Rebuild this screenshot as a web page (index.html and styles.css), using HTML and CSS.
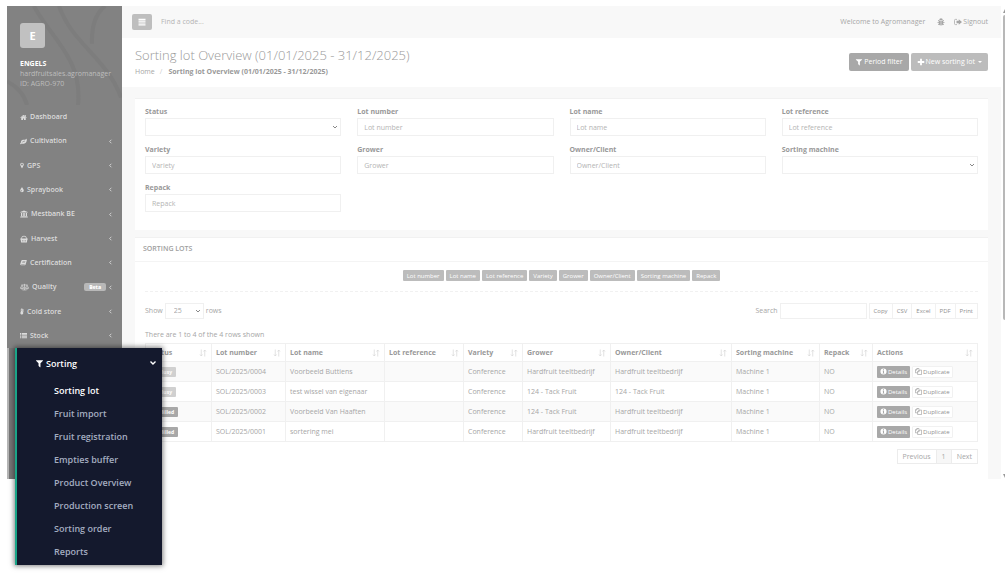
FILE: index.html
```html
<!DOCTYPE html>
<html lang="en">
<head>
<meta charset="utf-8">
<title>Sorting lot Overview</title>
<link rel="stylesheet" href="styles.css">
</head>
<body>
<svg class="sprite" aria-hidden="true">
  <symbol id="filter" viewBox="0 0 1792 1792"><path d="M1595 295q17 41-14 70l-493 493v742q0 42-39 59-13 5-25 5-27 0-45-19l-256-256q-19-19-19-45v-486l-493-493q-31-29-14-70 17-39 59-39h1280q42 0 59 39z"/></symbol>
  <symbol id="home" viewBox="0 0 1792 1792"><path d="M1472 992v480q0 26-19 45t-45 19h-384v-384h-256v384h-384q-26 0-45-19t-19-45v-480q0-1 .5-3t.5-3l575-474 575 474q1 2 1 6zm223-69l-62 74q-8 9-21 11h-3q-13 0-21-7l-692-577-692 577q-12 8-24 7-13-2-21-11l-62-74q-8-10-7-23.5t11-21.5l719-599q32-26 76-26t76 26l244 204v-195q0-14 9-23t23-9h192q14 0 23 9t9 23v408l219 182q10 8 11 21.5t-7 23.5z"/></symbol>
  <symbol id="leaf" viewBox="0 0 16 16"><path fill-rule="evenodd" d="M15.300 2C16.500 7 14 12.500 8.500 13c-2 .2-3.500-.4-4.500-.7-.8 0-1.500 2-2.500 2S0 13.300.3 12.700c.4-1 1.900-1.500 1.700-2.400C1.600 6.500 4 4.300 7 4c3-.3 5.500.3 7-2 .4-.6 1-.6 1.300 0zM4.500 10.800C7 8.400 9 7.800 11.500 7.500V6.500C8.500 6.500 6 7.800 4 10z"/></symbol>
  <symbol id="pin" viewBox="0 0 10 16"><path fill-rule="evenodd" d="M5 1a4.500 4.500 0 0 1 4.500 4.500c0 1.500-.6 2.200-1 3L5.800 14.500q-.8 1-1.600 0L1.500 8.500c-.4-.8-1-1.500-1-3A4.500 4.500 0 0 1 5 1zm0 2.300a2.200 2.200 0 1 0 0 4.400 2.200 2.200 0 0 0 0-4.400z"/></symbol>
  <symbol id="drop" viewBox="0 0 10 16"><path fill-rule="evenodd" d="M5 1C5.500 4 9.500 7 9.500 10.500a4.500 4.500 0 0 1-9 0C.5 7 4.500 4 5 1zM4.500 9.500C3 10.500 2.500 12 4 12.800c1.500 0 1.500-2 .5-3.300z"/></symbol>
  <symbol id="bank" viewBox="0 0 16 16"><path d="M8 1l7.500 3v1h-15V4zM2 6h2v6h1.500V6h2v6h1V6h2v6H12V6h2v6h.8v1H1.200v-1H2zM.5 13.500h15V15H.5z"/></symbol>
  <symbol id="basket" viewBox="0 0 16 16"><path fill-rule="evenodd" d="M2.500 7C2.500 4 4.500 1.500 8 1.500S13.500 4 13.500 7h2v2h-.8l-.9 6H2.200l-.9-6H.5V7zm1.500 0h8c0-2.500-1.500-4-4-4S4 4.500 4 7zm.5 3v3h1v-3zm3 0v3h1v-3zm3 0v3h1v-3z"/></symbol>
  <symbol id="book" viewBox="0 0 16 16"><path fill-rule="evenodd" d="M5 2h9.500c1 0 1.300.7 1 1.500l-2.700 9c-.3.900-1 1.500-2 1.500H2.500C1 14 .2 12.500.6 11.300L3 4c.4-1.200 1-2 2-2zm1 3l-.3 1h6.500l.3-1zm-.8 2.500l-.3 1h6.500l.3-1zM2.300 11.500c-.2.600.2 1 .8 1h7.500l.3-1z"/></symbol>
  <symbol id="scale" viewBox="0 0 20 16"><path fill="none" stroke="currentColor" stroke-width="1.500" d="M10 1v13.500M5.500 14.500h9M3 3.500h14M4.500 4l-3.500 6.500h7zM15.500 4L12 10.500h7zM1 10.500c.5 2.500 6.500 2.500 7 0M12 10.500c.5 2.500 6.500 2.500 7 0"/></symbol>
  <symbol id="thermo" viewBox="0 0 10 16"><path fill-rule="evenodd" d="M2 3a2.500 2.500 0 0 1 5 0v6a3.600 3.600 0 1 1-5 0zm2 0v3h1V3zM8 3h2v1.200H8zm0 2.500h2v1.200H8zM8 8h2v1.200H8z"/></symbol>
  <symbol id="list" viewBox="0 0 16 16"><path d="M0 2h2.500v2.300H0zm4 0h12v2.300H4zM0 5.300h2.500v2.300H0zm4 0h12v2.300H4zM0 8.600h2.500v2.300H0zm4 0h12v2.300H4zM0 12h2.500v2.300H0zm4 0h12v2.300H4z"/></symbol>
  <symbol id="lines" viewBox="0 0 16 16"><path d="M1 1.500h14v2.300H1zm0 3.700h14v2.300H1zm0 3.700h14v2.300H1zm0 3.700h14v2.300H1z"/></symbol>
  <symbol id="bug" viewBox="0 0 16 16"><path d="M4.500 4a3.500 3.500 0 0 1 7 0zM3.500 5h4v10C5 15 3.500 13.500 3.500 11zm5 0h4v6c0 2.500-1.500 4-4 4z"/><path fill="none" stroke="currentColor" stroke-width="1.500" d="M4 6L2 4M4 9H1M4 12l-2 2M12 6l2-2M12 9h3M12 12l2 2"/></symbol>
  <symbol id="signout" viewBox="0 0 16 16"><path fill="none" stroke="currentColor" stroke-width="1.500" d="M6 2.800H3A2 2 0 0 0 1 5v6a2 2 0 0 0 2 2.200h3"/><path d="M9.500 2.500l6.500 5.500-6.500 5.500v-3H5v-5h4.500z"/></symbol>
  <symbol id="plus" viewBox="0 0 16 16"><path d="M6.200 1.500h3.600v4.700h4.700v3.600H9.800v4.700H6.200V9.800H1.500V6.200h4.700z"/></symbol>
  <symbol id="info" viewBox="0 0 16 16"><path fill-rule="evenodd" d="M8 1a7 7 0 1 1 0 14A7 7 0 0 1 8 1zM6.800 3v2h2.400V3zM6 6.300v1.400h.8v3.600H6v1.400h4v-1.400h-.8v-5z"/></symbol>
  <symbol id="copy" viewBox="0 0 16 16"><path fill="none" stroke="currentColor" stroke-width="1.300" d="M6 11H1V4.500L4.500 1H9v3M4.500 1v3.500H1M9.500 4.800H15V15H6V8.300zM9.500 4.800v3.500H6"/></symbol>
  <symbol id="left" viewBox="0 0 10 16"><path fill="none" stroke="currentColor" stroke-width="2" d="M7 4L3 8l4 4"/></symbol>
  <symbol id="down" viewBox="0 0 16 16"><path fill="none" stroke="currentColor" stroke-width="2.800" d="M3 5l5 5 5-5"/></symbol>
  <symbol id="sort" viewBox="0 0 16 16"><path fill="none" stroke="currentColor" stroke-width="1.500" d="M4.500 1v13M2 11l2.500 3L7 11M11.500 15V2M9 5l2.500-3L14 5"/></symbol>
</svg>

<div class="app">
  <aside class="sidebar">
    <svg class="pattern" viewBox="0 0 115 105" preserveAspectRatio="none" aria-hidden="true"><path d="M27 0C42 32 76 55 71 105M52 0C65 40 100 55 114 97M0 80q16 9 20 25M98 0q-14 12-13 40"/></svg>
    <header class="profile">
      <div class="avatar">E</div>
      <strong>ENGELS</strong>
      <span>hardfruitsales.agromanager</span>
      <span>ID: AGRO-970</span>
    </header>
    <nav class="menu">
      <a href="#"><svg><use href="#home"/></svg>Dashboard</a>
      <a href="#"><svg><use href="#leaf"/></svg>Cultivation<svg class="arrow"><use href="#left"/></svg></a>
      <a href="#"><svg class="slim"><use href="#pin"/></svg>GPS<svg class="arrow"><use href="#left"/></svg></a>
      <a href="#"><svg class="slim"><use href="#drop"/></svg>Spraybook<svg class="arrow"><use href="#left"/></svg></a>
      <a href="#"><svg class="wide"><use href="#bank"/></svg>Mestbank BE<svg class="arrow"><use href="#left"/></svg></a>
      <a href="#"><svg class="wide"><use href="#basket"/></svg>Harvest<svg class="arrow"><use href="#left"/></svg></a>
      <a href="#"><svg><use href="#book"/></svg>Certification<svg class="arrow"><use href="#left"/></svg></a>
      <a href="#"><svg class="wider"><use href="#scale"/></svg>Quality<b class="beta">Beta</b><svg class="arrow"><use href="#left"/></svg></a>
      <a href="#"><svg class="slim"><use href="#thermo"/></svg>Cold store<svg class="arrow"><use href="#left"/></svg></a>
      <a href="#"><svg><use href="#list"/></svg>Stock<svg class="arrow"><use href="#left"/></svg></a>
    </nav>
    <div class="current">
      <nav class="flyout">
        <a class="flyout-title" href="#"><svg><use href="#filter"/></svg>Sorting<svg class="caret"><use href="#down"/></svg></a>
        <a class="active" href="#">Sorting lot</a>
        <a href="#">Fruit import</a>
        <a href="#">Fruit registration</a>
        <a href="#">Empties buffer</a>
        <a href="#">Product Overview</a>
        <a href="#">Production screen</a>
        <a href="#">Sorting order</a>
        <a href="#">Reports</a>
      </nav>
    </div>
  </aside>

  <main class="main">
    <div class="topbar">
      <button class="toggle" aria-label="Toggle menu"><svg><use href="#lines"/></svg></button>
      <input class="find" type="text" placeholder="Find a code..." aria-label="Find a code">
      <span class="welcome">Welcome to Agromanager</span>
      <a class="bug" href="#" aria-label="Report a bug"><svg><use href="#bug"/></svg></a>
      <a class="signout" href="#"><svg><use href="#signout"/></svg>Signout</a>
    </div>
    <div class="heading">
      <div>
        <h1>Sorting lot Overview (01/01/2025 - 31/12/2025)</h1>
        <div class="crumbs"><a href="#">Home</a><i>/</i><strong>Sorting lot Overview (01/01/2025 - 31/12/2025)</strong></div>
      </div>
      <div class="heading-actions">
        <button class="btn dark"><svg><use href="#filter"/></svg>Period filter</button>
        <button class="btn"><svg><use href="#plus"/></svg>New sorting lot<span class="tri"></span></button>
      </div>
    </div>

    <section class="card filters">
      <label>Status<select><option></option></select></label>
      <label>Lot number<input type="text" placeholder="Lot number"></label>
      <label>Lot name<input type="text" placeholder="Lot name"></label>
      <label>Lot reference<input type="text" placeholder="Lot reference"></label>
      <label>Variety<input type="text" placeholder="Variety"></label>
      <label>Grower<input type="text" placeholder="Grower"></label>
      <label>Owner/Client<input type="text" placeholder="Owner/Client"></label>
      <label>Sorting machine<select><option></option></select></label>
      <label>Repack<input type="text" placeholder="Repack"></label>
    </section>

    <section class="card lots">
      <h2>SORTING LOTS</h2>
      <div class="body">
        <div class="chips">
          <button>Lot number</button><button>Lot name</button><button>Lot reference</button><button>Variety</button><button>Grower</button><button>Owner/Client</button><button>Sorting machine</button><button>Repack</button>
        </div>
        <div class="tools">
          <label>Show <select><option>25</option></select> rows</label>
          <label class="search">Search <input type="text"></label>
          <div class="group"><button>Copy</button><button>CSV</button><button>Excel</button><button>PDF</button><button>Print</button></div>
        </div>
        <p class="count">There are 1 to 4 of the 4 rows shown</p>
        <table>
          <colgroup><col class="c-status"><col class="c-num"><col class="c-name"><col class="c-ref"><col class="c-var"><col class="c-grow"><col class="c-own"><col class="c-mach"><col class="c-rep"><col class="c-act"></colgroup>
          <thead><tr>
            <th><div>Status<svg><use href="#sort"/></svg></div></th>
            <th><div>Lot number<svg><use href="#sort"/></svg></div></th>
            <th><div>Lot name<svg><use href="#sort"/></svg></div></th>
            <th><div>Lot reference<svg><use href="#sort"/></svg></div></th>
            <th><div>Variety<svg><use href="#sort"/></svg></div></th>
            <th><div>Grower<svg><use href="#sort"/></svg></div></th>
            <th><div>Owner/Client<svg><use href="#sort"/></svg></div></th>
            <th><div>Sorting machine<svg><use href="#sort"/></svg></div></th>
            <th><div>Repack<svg><use href="#sort"/></svg></div></th>
            <th><div>Actions<svg><use href="#sort"/></svg></div></th>
          </tr></thead>
          <tbody>
            <tr><td><b class="tag">Busy</b></td><td>SOL/2025/0004</td><td>Voorbeeld Buttiens</td><td></td><td>Conference</td><td>Hardfruit teeltbedrijf</td><td>Hardfruit teeltbedrijf</td><td>Machine 1</td><td>NO</td><td><div class="acts"><button class="details"><svg><use href="#info"/></svg>Details</button><button class="dup"><svg><use href="#copy"/></svg>Duplicate</button></div></td></tr>
            <tr><td><b class="tag">Busy</b></td><td>SOL/2025/0003</td><td>test wissel van eigenaar</td><td></td><td>Conference</td><td>124 - Tack Fruit</td><td>124 - Tack Fruit</td><td>Machine 1</td><td>NO</td><td><div class="acts"><button class="details"><svg><use href="#info"/></svg>Details</button><button class="dup"><svg><use href="#copy"/></svg>Duplicate</button></div></td></tr>
            <tr><td><b class="tag billed">Billed</b></td><td>SOL/2025/0002</td><td>Voorbeeld Van Haaften</td><td></td><td>Conference</td><td>124 - Tack Fruit</td><td>Hardfruit teeltbedrijf</td><td>Machine 1</td><td>NO</td><td><div class="acts"><button class="details"><svg><use href="#info"/></svg>Details</button><button class="dup"><svg><use href="#copy"/></svg>Duplicate</button></div></td></tr>
            <tr><td><b class="tag billed">Billed</b></td><td>SOL/2025/0001</td><td>sortering mei</td><td></td><td>Conference</td><td>Hardfruit teeltbedrijf</td><td>Hardfruit teeltbedrijf</td><td>Machine 1</td><td>NO</td><td><div class="acts"><button class="details"><svg><use href="#info"/></svg>Details</button><button class="dup"><svg><use href="#copy"/></svg>Duplicate</button></div></td></tr>
          </tbody>
        </table>
        <div class="pager"><a href="#">Previous</a><a class="on" href="#">1</a><a href="#">Next</a></div>
      </div>
    </section>
  </main>
  <div class="scroll" aria-hidden="true"><span class="up"></span><span class="thumb"></span><span class="dn"></span></div>
</div>
</body>
</html>
```
FILE: styles.css
```css
* { box-sizing: border-box; }
body { margin: 0; min-height: 100vh; background: #fff; color: #a6a6a6; font: 7px/10px "Open Sans", sans-serif; }
a { color: inherit; text-decoration: none; }
button, input, select { font: inherit; color: inherit; margin: 0; }
select { appearance: none; background: #fff url("data:image/svg+xml,%3Csvg xmlns='http://www.w3.org/2000/svg' viewBox='0 0 6 6'%3E%3Cpath d='M1 2l2 2 2-2' fill='none' stroke='%23888'/%3E%3C/svg%3E") no-repeat right 2px center / 6px 6px; }
svg { width: 8px; height: 8px; fill: currentColor; flex: none; }
.sprite { position: absolute; width: 0; height: 0; }

.app { display: flex; padding: 6px 0 0 7px; }

/* sidebar */
.sidebar { position: relative; flex: 0 0 115px; min-width: 0; display: flex; flex-direction: column; background: #828282; color: #dcdcdc; }
.pattern { position: absolute; top: 0; left: 0; width: 100%; height: 99px; }
.pattern path { fill: none; stroke: #7d7d7d; stroke-width: 4; }
.profile { position: relative; display: flex; flex-direction: column; padding: 17px 0 0 13px; color: #bdbdbd; }
.profile strong { color: #fff; }
.avatar { width: 25px; height: 25px; margin-bottom: 11px; border-radius: 3px; background: #c1c1c1; color: #fff; font: bold 11px/25px "Open Sans", sans-serif; text-align: center; }
.menu { display: flex; flex-direction: column; justify-content: space-between; min-height: 243px; margin-top: 16px; }
.menu a { display: flex; align-items: center; height: 24px; padding: 0 9px 0 13px; font-weight: 600; }
.menu svg { width: 7px; height: 7px; margin-right: 3px; }
.menu svg.slim { width: 4px; }
.menu svg.wide { width: 8px; height: 8px; }
.menu svg.wider { width: 9px; height: 8px; }
.menu svg.arrow { width: 5px; margin: 0 0 0 auto; }
.beta { margin-left: auto; padding: 0 5px; border-radius: 2px; background: #b8b8b8; color: #fff; font-size: 5px; line-height: 8px; }
.menu .beta + .arrow { margin-left: 2px; }
.current { position: relative; flex: 1; border-left: 2px solid #b5b5b5; background: #777; }
.flyout { position: absolute; top: 0; left: 6px; z-index: 2; width: 147px; padding-bottom: 2px; border-left: 2px solid #1aa588; background: #14192d; box-shadow: 0 0 5px 1px rgba(0, 0, 0, .5); color: #a4adc0; font: 600 9px/13px "Open Sans", sans-serif; }
.flyout a { display: flex; align-items: center; height: 23px; padding-left: 37px; }
.flyout .flyout-title { height: 31px; padding: 0 5px 1px 18px; color: #fff; }
.flyout .flyout-title svg { width: 9px; height: 9px; margin-right: 2px; }
.flyout .flyout-title .caret { width: 8px; height: 8px; margin: 0 0 0 auto; }
.flyout .active { color: #fff; }

/* main column */
.main { flex: 1; min-width: 0; background: #f8f8f8; }
.topbar { display: flex; align-items: center; height: 32px; padding: 0 13px 0 10px; }
.toggle { display: flex; align-items: center; justify-content: center; width: 20px; height: 16px; padding: 0; border: 0; border-radius: 2px; background: #bebebe; color: #fff; }
.find { flex: 1; margin-left: 9px; padding: 0; border: 0; background: none; }
::placeholder { color: #b4b4b4; opacity: 1; }
.bug { display: flex; margin: 0 9px 0 12px; }
.signout { display: flex; align-items: center; gap: 1px; }
.heading { display: flex; justify-content: space-between; height: 49px; padding: 9px 13px 0; background: #fff; }
h1 { margin: 0; font: 300 13px/17px "Open Sans", sans-serif; color: #999; }
.crumbs { margin-top: 3px; }
.crumbs i { margin: 0 6px 0 5px; font-style: normal; color: #ccc; }
.crumbs strong { color: #999; }
.heading-actions { display: flex; gap: 2px; padding-top: 6px; }
.btn { display: flex; align-items: center; gap: 1px; height: 18px; padding: 0 6px; border: 0; border-radius: 2px; background: #bcbcbc; color: #fff; }
.btn.dark { background: #a8a8a8; }
.tri { margin-left: 2px; border: 2px solid transparent; border-top-color: #fff; border-bottom: 0; }

.card { margin: 0 13px; background: #fff; border-top: 1px solid #f1f1f1; }
.filters { display: grid; grid-template-columns: repeat(4, 1fr); gap: 9px 16px; margin-top: 11px; padding: 8px 10px 18px; }
.filters label { display: flex; flex-direction: column; gap: 2px; font-weight: 700; line-height: 9px; color: #999; }
.filters input, .filters select { width: 100%; height: 18px; padding: 0 6px; border: 1px solid #f0f0f0; background-color: #fff; font-weight: 400; }
.lots { margin-top: 7px; }
h2 { margin: 0; padding: 6px 8px 7px; font: 600 7px/10px "Open Sans", sans-serif; color: #a0a0a0; border-bottom: 1px solid #f4f4f4; }
.body { padding: 8px 10px 15px; }
.chips { display: flex; justify-content: center; gap: 2px; padding-bottom: 10px; border-bottom: 1px dashed #f1f1f1; }
.chips button { height: 11px; padding: 0 4px; border: 0; border-radius: 1px; background: #bcbcbc; color: #fff; font-size: 6px; line-height: 10px; }
.tools { display: flex; align-items: center; margin-top: 11px; }
.tools label { display: flex; align-items: center; gap: 2px; }
.tools select { width: 39px; height: 16px; padding: 0 8px; border: 1px solid #f0f0f0; }
.search { margin-left: auto; }
.search input { width: 87px; height: 16px; border: 1px solid #f0f0f0; background: #fff; }
.group { display: flex; margin-left: 2px; border: 1px solid #f0f0f0; }
.group button { height: 14px; padding: 0 4px; border: 0; border-right: 1px solid #f1f1f1; background: #fff; color: #909090; font-size: 6px; }
.group button:last-child { border: 0; }
.count { margin: 11px 0 3px; }

table { width: 100%; table-layout: fixed; border-collapse: collapse; }
th, td { padding: 0 4px; border: 1px solid #f0f0f0; text-align: left; white-space: nowrap; }
th { height: 18px; color: #999; }
th div { display: flex; align-items: center; justify-content: space-between; }
th svg { width: 8px; height: 8px; color: #d8d8d8; }
td { height: 20px; }
tbody tr:nth-child(odd) { background: #fafafa; }
.c-status { width: 66px; } .c-num { width: 74px; } .c-name { width: 99px; } .c-ref { width: 79px; } .c-var { width: 59px; }
.c-grow { width: 88px; } .c-own { width: 121px; } .c-mach { width: 88px; } .c-rep { width: 53px; }
.tag { display: inline-block; margin-left: 6px; padding: 0 4px; border-radius: 1px; background: #d0d0d0; color: #fff; font-size: 5px; line-height: 10px; }
.tag.billed { background: #a8a8a8; }
.acts { display: flex; gap: 2px; }
.acts button { display: flex; align-items: center; gap: 1px; height: 12px; padding: 0 3px; border: 0; border-radius: 1px; font-size: 6px; }
.acts svg { width: 7px; height: 7px; }
.details { background: #a8a8a8; color: #fff; }
.acts .dup { padding: 0 2px; border: 1px solid #f1f1f1; background: #fff; color: #909090; }
.pager { display: flex; width: max-content; margin: 7px 0 0 auto; border: 1px solid #ececec; }
.pager a { padding: 1px 5px; line-height: 11px; }
.pager .on { border: solid #ececec; border-width: 0 1px; background: #f7f7f7; }

/* scroll indicator */
.scroll { display: flex; flex-direction: column; flex: 0 0 4px; padding: 3px 0 1px 2px; overflow: hidden; }
.up, .dn { width: 4px; border: 2px solid transparent; border-bottom: 4px solid #999; border-top: 0; }
.dn { margin-top: auto; border-top: 4px solid #999; border-bottom: 0; }
.thumb { height: 65%; margin-top: 2px; border-radius: 2px 0 0 2px; background: #b8b8b8; }
```
